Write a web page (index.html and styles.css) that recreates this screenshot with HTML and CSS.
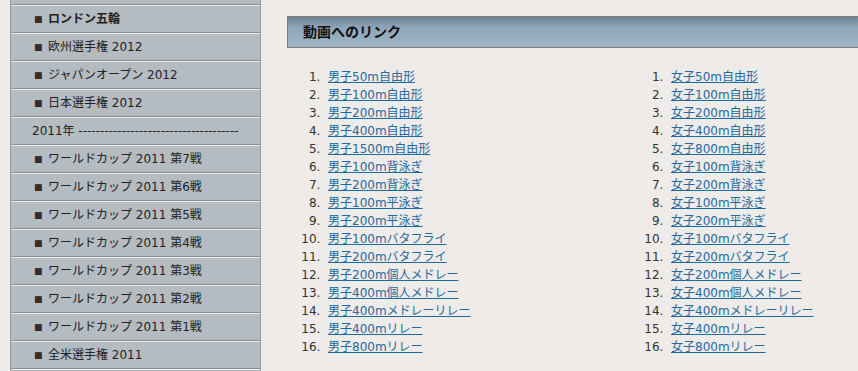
FILE: index.html
```html
<html>
    <head>
    <title>動画へのリンク</title>
    <link rel="stylesheet" href="styles.css">
    </head>

    <body>
        <div class="page">
            <!-- 左側のメニュー -->
            <ul class="side">
                <li class="empty">&nbsp;</li>
                <li class="item strong"><span class="dot">■</span>ロンドン五輪</li>
                <li class="item"><span class="dot">■</span>欧州選手権 2012</li>
                <li class="item"><span class="dot">■</span>ジャパンオープン 2012</li>
                <li class="item"><span class="dot">■</span>日本選手権 2012</li>
                <li class="year">2011年 -------------------------------------</li>
                <li class="item"><span class="dot">■</span>ワールドカップ 2011 第7戦</li>
                <li class="item"><span class="dot">■</span>ワールドカップ 2011 第6戦</li>
                <li class="item"><span class="dot">■</span>ワールドカップ 2011 第5戦</li>
                <li class="item"><span class="dot">■</span>ワールドカップ 2011 第4戦</li>
                <li class="item"><span class="dot">■</span>ワールドカップ 2011 第3戦</li>
                <li class="item"><span class="dot">■</span>ワールドカップ 2011 第2戦</li>
                <li class="item"><span class="dot">■</span>ワールドカップ 2011 第1戦</li>
                <li class="item"><span class="dot">■</span>全米選手権 2011</li>
                <li class="empty">&nbsp;</li>
            </ul>

            <!-- 本文 -->
            <div class="main">
                <div class="title">動画へのリンク</div>
                <div class="lists">
                    <ol>
                        <li><a href="#">男子50m自由形</a></li>
                        <li><a href="#">男子100m自由形</a></li>
                        <li><a href="#">男子200m自由形</a></li>
                        <li><a href="#">男子400m自由形</a></li>
                        <li><a href="#">男子1500m自由形</a></li>
                        <li><a href="#">男子100m背泳ぎ</a></li>
                        <li><a href="#">男子200m背泳ぎ</a></li>
                        <li><a href="#">男子100m平泳ぎ</a></li>
                        <li><a href="#">男子200m平泳ぎ</a></li>
                        <li><a href="#">男子100mバタフライ</a></li>
                        <li><a href="#">男子200mバタフライ</a></li>
                        <li><a href="#">男子200m個人メドレー</a></li>
                        <li><a href="#">男子400m個人メドレー</a></li>
                        <li><a href="#">男子400mメドレーリレー</a></li>
                        <li><a href="#">男子400mリレー</a></li>
                        <li><a href="#">男子800mリレー</a></li>
                    </ol>
                    <ol>
                        <li><a href="#">女子50m自由形</a></li>
                        <li><a href="#">女子100m自由形</a></li>
                        <li><a href="#">女子200m自由形</a></li>
                        <li><a href="#">女子400m自由形</a></li>
                        <li><a href="#">女子800m自由形</a></li>
                        <li><a href="#">女子100m背泳ぎ</a></li>
                        <li><a href="#">女子200m背泳ぎ</a></li>
                        <li><a href="#">女子100m平泳ぎ</a></li>
                        <li><a href="#">女子200m平泳ぎ</a></li>
                        <li><a href="#">女子100mバタフライ</a></li>
                        <li><a href="#">女子200mバタフライ</a></li>
                        <li><a href="#">女子200m個人メドレー</a></li>
                        <li><a href="#">女子400m個人メドレー</a></li>
                        <li><a href="#">女子400mメドレーリレー</a></li>
                        <li><a href="#">女子400mリレー</a></li>
                        <li><a href="#">女子800mリレー</a></li>
                    </ol>
                </div>
            </div>
        </div>
    </body>
</html>
```

FILE: styles.css
```css
*{
    padding:0;
    margin:0;
}

html{
    overflow:hidden;
}

body{
    background-color:#eeebe8;
    font:12px "DejaVu Sans","Noto Sans CJK JP",sans-serif;
    color:#222;
}

.page{
    display:flex;
    align-items:flex-start;
    padding-left:10px;
}

/*左側のメニュー*/
.side{
    list-style:none;
    width:249px;
    margin-top:-23px;
    border-left:1px solid #9a9a9a;
    border-right:1px solid #9a9a9a;
    flex-shrink:0;
}

.side li{
    height:26px;
    line-height:26px;
    background-color:#b4bbc1;
    border-top:1px solid #ebebeb;
    border-bottom:1px solid #8e8e8e;
    white-space:nowrap;
    overflow:hidden;
}

.side .item{
    padding-left:23px;
}

.side .strong{
    font-weight:bold;
}

.side .year{
    padding-left:21px;
}

.side .dot{
    display:inline-block;
    width:14px;
    font-size:9px;
    color:#3b2b20;
    vertical-align:top;
}

/*本文*/
.main{
    width:620px;
    flex-shrink:0;
    margin-left:26px;
    padding-top:16px;
}

.title{
    height:30px;
    line-height:30px;
    padding-left:15px;
    font-size:14px;
    font-weight:bold;
    color:#111;
    border:1px solid #7c7c7c;
    border-right:none;
    background:linear-gradient(#6e8597,#8ea6b8 35%,#a0b6c7);
}

.lists{
    display:grid;
    grid-template-columns:343px 343px;
    padding-left:3px;
    margin-top:20px;
}

.lists ol{
    padding-left:38px;
    line-height:18px;
    color:#333;
}

.lists li::marker{
    content:counter(list-item) ".\00a0\00a0";
}

.lists a{
    color:#1f6a9f;
}
```
